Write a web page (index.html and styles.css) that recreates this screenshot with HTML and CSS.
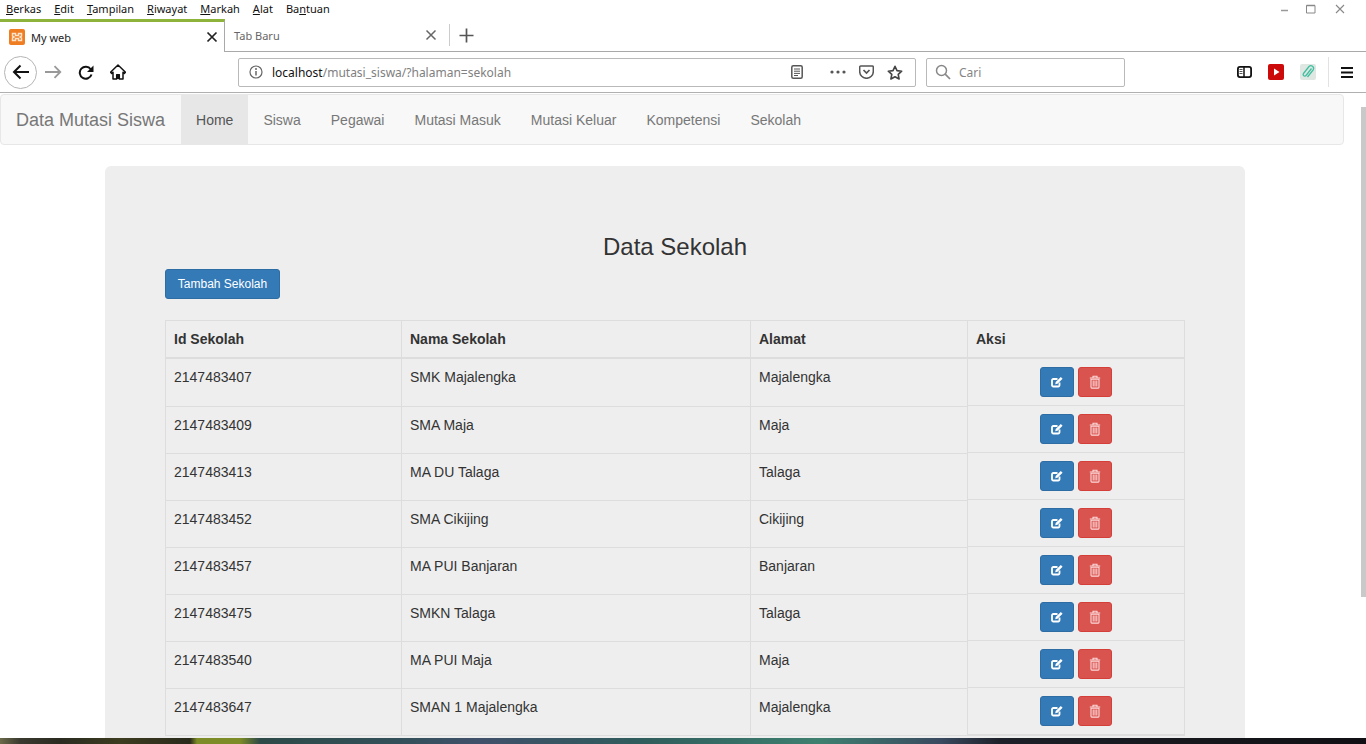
FILE: index.html
```html
<!DOCTYPE html>
<html lang="en">

<head>
    <meta charset="UTF-8">
    <meta name="viewport" content="width=device-width, initial-scale=1.0">
    <title>My web</title>
    <link rel="stylesheet" href="styles.css">
</head>

<body>
    <svg class="defs" width="0" height="0">
        <symbol id="icon-edit" viewBox="0 0 14 14">
            <path d="M9.5 7.5v2.7a1.3 1.3 0 0 1-1.3 1.3H3.3A1.3 1.3 0 0 1 2 10.200V5.300A1.300 1.300 0 0 1 3.300 4H7.500" fill="none" stroke="currentColor" stroke-width="1.800"/>
            <path d="M5.200 9.300l.5-2.300L10.800 1.900l1.800 1.800-5.100 5.100z" fill="currentColor"/>
        </symbol>
        <symbol id="icon-trash" viewBox="0 0 14 14">
            <path d="M1.800 3h10.400M5 3V1.300h4V3" fill="none" stroke="currentColor" stroke-width="1.100"/>
            <path d="M3 4.200h8v8.100a.8.8 0 0 1-.8.8H3.800a.8.8 0 0 1-.8-.8z" fill="none" stroke="currentColor" stroke-width="1.100"/>
            <path d="M5.200 5.500v6M7 5.500v6M8.800 5.500v6" stroke="currentColor" stroke-width="1"/>
        </symbol>
    </svg>

    <div class="browser">
        <div class="menubar">
            <div class="menu-items">
                <span><u>B</u>erkas</span>
                <span><u>E</u>dit</span>
                <span><u>T</u>ampilan</span>
                <span><u>R</u>iwayat</span>
                <span><u>M</u>arkah</span>
                <span><u>A</u>lat</span>
                <span>Ba<u>n</u>tuan</span>
            </div>
            <div class="window-controls">
                <svg width="10" height="10" viewBox="0 0 10 10"><path d="M1 6.500h7" stroke="#999" stroke-width="1.500"/></svg>
                <svg width="10" height="10" viewBox="0 0 10 10"><path d="M.5 1.500h8.500v7.500H.5z" fill="none" stroke="#888"/><path d="M.5 1.500h8.500" stroke="#888" stroke-width="1.500"/></svg>
                <svg width="10" height="10" viewBox="0 0 10 10"><path d="M1 1l8 8M9 1l-8 8" stroke="#888" stroke-width="1.100"/></svg>
            </div>
        </div>

        <div class="tabbar">
            <div class="tab tab-active">
                <svg class="favicon" width="16" height="16" viewBox="0 0 16 16">
                    <rect width="16" height="16" rx="2" fill="#ef7d22"/>
                    <path d="M3.500 4.500h3v2h3v-2h3v2.500l-1.500 1 1.500 1v2.500h-3v-2h-3v2h-3V9l1.500-1-1.500-1z" fill="none" stroke="#fde3c8" stroke-width="1.500"/>
                </svg>
                <span class="tab-title">My web</span>
                <svg class="tab-close" width="12" height="12" viewBox="0 0 12 12"><path d="M1.500 1.500l9 9M10.500 1.500l-9 9" stroke="#222" stroke-width="1.700"/></svg>
            </div>
            <div class="tab tab-idle">
                <span class="tab-title">Tab Baru</span>
                <svg class="tab-close" width="12" height="12" viewBox="0 0 12 12"><path d="M1.500 1.500l9 9M10.500 1.500l-9 9" stroke="#666" stroke-width="1.500"/></svg>
            </div>
            <div class="tab-new">
                <svg width="15" height="15" viewBox="0 0 15 15"><path d="M7.500 .5v14M.5 7.500h14" stroke="#555" stroke-width="1.700"/></svg>
            </div>
        </div>

        <div class="toolbar">
            <div class="back-btn">
                <svg width="18" height="16" viewBox="0 0 18 16"><path d="M17 8H2M8.500 1.500L2 8l6.500 6.500" fill="none" stroke="#111" stroke-width="2"/></svg>
            </div>
            <svg class="tool-forward" width="17" height="14" viewBox="0 0 17 14"><path d="M0 7h15M9.500 1.200L15.300 7l-5.800 5.800" fill="none" stroke="#999" stroke-width="1.800"/></svg>
            <svg class="tool-reload" width="16" height="15" viewBox="0 0 16 15"><path d="M13.500 9.500a6 6 0 1 1-.8-5.200" fill="none" stroke="#111" stroke-width="2"/><path d="M15.500 .5v6.500h-6.500z" fill="#111"/></svg>
            <svg class="tool-home" width="16" height="16" viewBox="0 0 16 16"><path d="M8 1L.5 8.200l1.200 1.200L3 8.200V15h3.700v-4.200h2.600V15H13V8.200l1.300 1.200 1.200-1.200z" fill="#fff" stroke="#111" stroke-width="1.500" stroke-linejoin="round"/><path d="M6.500 15v-4.500h3V15z" fill="#111"/></svg>

            <div class="urlbar">
                <svg class="url-info" width="14" height="14" viewBox="0 0 14 14"><circle cx="7" cy="7" r="6" fill="none" stroke="#666" stroke-width="1.200"/><path d="M7 6v4.500" stroke="#666" stroke-width="1.500"/><circle cx="7" cy="3.900" r="1" fill="#666"/></svg>
                <span class="url-text"><span class="url-host">localhost</span>/mutasi_siswa/?halaman=sekolah</span>
                <svg class="url-reader" width="12" height="14" viewBox="0 0 12 14"><rect x=".8" y=".8" width="10.400" height="12.400" rx="1.500" fill="none" stroke="#555" stroke-width="1.500"/><path d="M3 4h6M3 6.200h6M3 8.400h6M3 10.500h4" stroke="#555"/></svg>
                <svg class="url-dots" width="16" height="4" viewBox="0 0 16 4"><circle cx="2" cy="2" r="1.600" fill="#555"/><circle cx="8" cy="2" r="1.600" fill="#555"/><circle cx="14" cy="2" r="1.600" fill="#555"/></svg>
                <svg class="url-pocket" width="15" height="14" viewBox="0 0 15 14"><path d="M1.700 1h11.600a1 1 0 0 1 1 1v4.500a6.800 6.800 0 0 1-13.600 0V2a1 1 0 0 1 1-1z" fill="none" stroke="#555" stroke-width="1.500"/><path d="M4.500 5l3 3 3-3" fill="none" stroke="#555" stroke-width="1.700"/></svg>
                <svg class="url-star" width="16" height="15" viewBox="0 0 16 15"><path d="M8 1.300l2 4.300 4.700.6-3.500 3.200.9 4.600L8 11.700 3.900 14l.9-4.600L1.300 6.200 6 5.600z" fill="none" stroke="#444" stroke-width="1.600" stroke-linejoin="round"/></svg>
            </div>

            <div class="searchbar">
                <svg width="16" height="16" viewBox="0 0 16 16"><circle cx="6.500" cy="6.500" r="5" fill="none" stroke="#888" stroke-width="1.500"/><path d="M10.200 10.200L15 15" stroke="#888" stroke-width="1.700"/></svg>
                <span>Cari</span>
            </div>

            <div class="tool-right">
                <svg width="15" height="12" viewBox="0 0 15 12"><rect x=".9" y=".9" width="13.200" height="10.200" rx="2" fill="#fff" stroke="#111" stroke-width="1.800"/><path d="M7 1v10" stroke="#111" stroke-width="1.500"/><path d="M2.500 3.500h3M2.500 5.500h3M2.500 7.500h3" stroke="#555"/></svg>
                <svg width="16" height="16" viewBox="0 0 16 16"><rect width="16" height="16" rx="2" fill="#cc0a0a"/><path d="M6 4.500l5.500 3.500L6 11.500z" fill="#fff"/></svg>
                <svg width="16" height="16" viewBox="0 0 16 16"><rect width="16" height="16" rx="2" fill="#dfe7e2"/><path d="M11.500 4.500L6 11.500a1.600 1.600 0 0 1-2.500-2l5.500-7a2.700 2.700 0 0 1 4.200 3.300L7.500 13" fill="none" stroke="#3fbfa0" stroke-width="1.300"/></svg>
                <div class="tool-sep"></div>
                <svg width="12" height="11" viewBox="0 0 12 11"><path d="M0 1h12M0 5.500h12M0 10h12" stroke="#111" stroke-width="1.800"/></svg>
            </div>
        </div>

        <div class="viewport">
            <div class="page">
                <nav class="navbar">
                    <a class="navbar-brand">Data Mutasi Siswa</a>
                    <a class="nav-link active">Home</a>
                    <a class="nav-link">Siswa</a>
                    <a class="nav-link">Pegawai</a>
                    <a class="nav-link">Mutasi Masuk</a>
                    <a class="nav-link">Mutasi Keluar</a>
                    <a class="nav-link">Kompetensi</a>
                    <a class="nav-link">Sekolah</a>
                </nav>

                <div class="jumbotron">
                    <h2 class="page-title">Data Sekolah</h2>
                    <button type="button" class="btn btn-add">Tambah Sekolah</button>

                    <table class="data-table">
                        <thead>
                            <tr>
                                <th class="col-id">Id Sekolah</th>
                                <th class="col-name">Nama Sekolah</th>
                                <th class="col-addr">Alamat</th>
                                <th>Aksi</th>
                            </tr>
                        </thead>
                        <tbody>
                            <tr>
                                <td>2147483407</td>
                                <td>SMK Majalengka</td>
                                <td>Majalengka</td>
                                <td class="actions"><button class="btn btn-icon btn-edit"><svg><use href="#icon-edit"/></svg></button><button class="btn btn-icon btn-delete"><svg><use href="#icon-trash"/></svg></button></td>
                            </tr>
                            <tr>
                                <td>2147483409</td>
                                <td>SMA Maja</td>
                                <td>Maja</td>
                                <td class="actions"><button class="btn btn-icon btn-edit"><svg><use href="#icon-edit"/></svg></button><button class="btn btn-icon btn-delete"><svg><use href="#icon-trash"/></svg></button></td>
                            </tr>
                            <tr>
                                <td>2147483413</td>
                                <td>MA DU Talaga</td>
                                <td>Talaga</td>
                                <td class="actions"><button class="btn btn-icon btn-edit"><svg><use href="#icon-edit"/></svg></button><button class="btn btn-icon btn-delete"><svg><use href="#icon-trash"/></svg></button></td>
                            </tr>
                            <tr>
                                <td>2147483452</td>
                                <td>SMA Cikijing</td>
                                <td>Cikijing</td>
                                <td class="actions"><button class="btn btn-icon btn-edit"><svg><use href="#icon-edit"/></svg></button><button class="btn btn-icon btn-delete"><svg><use href="#icon-trash"/></svg></button></td>
                            </tr>
                            <tr>
                                <td>2147483457</td>
                                <td>MA PUI Banjaran</td>
                                <td>Banjaran</td>
                                <td class="actions"><button class="btn btn-icon btn-edit"><svg><use href="#icon-edit"/></svg></button><button class="btn btn-icon btn-delete"><svg><use href="#icon-trash"/></svg></button></td>
                            </tr>
                            <tr>
                                <td>2147483475</td>
                                <td>SMKN Talaga</td>
                                <td>Talaga</td>
                                <td class="actions"><button class="btn btn-icon btn-edit"><svg><use href="#icon-edit"/></svg></button><button class="btn btn-icon btn-delete"><svg><use href="#icon-trash"/></svg></button></td>
                            </tr>
                            <tr>
                                <td>2147483540</td>
                                <td>MA PUI Maja</td>
                                <td>Maja</td>
                                <td class="actions"><button class="btn btn-icon btn-edit"><svg><use href="#icon-edit"/></svg></button><button class="btn btn-icon btn-delete"><svg><use href="#icon-trash"/></svg></button></td>
                            </tr>
                            <tr>
                                <td>2147483647</td>
                                <td>SMAN 1 Majalengka</td>
                                <td>Majalengka</td>
                                <td class="actions"><button class="btn btn-icon btn-edit"><svg><use href="#icon-edit"/></svg></button><button class="btn btn-icon btn-delete"><svg><use href="#icon-trash"/></svg></button></td>
                            </tr>
                        </tbody>
                    </table>
                </div>
            </div>
            <div class="scrollbar"><div class="scroll-thumb"></div></div>
        </div>

        <div class="taskbar"></div>
    </div>
</body>

</html>
```

FILE: styles.css
```css
* {
    box-sizing: border-box;
}

body {
    margin: 0;
    font-family: "Liberation Sans", Arial, sans-serif;
    font-size: 14px;
    color: #333;
    background-color: #fff;
    overflow: hidden;
}

.defs {
    display: none;
}

.browser {
    display: flex;
    flex-direction: column;
    height: 744px;
    overflow: hidden;
}

/* Browser chrome */
.menubar {
    display: flex;
    justify-content: space-between;
    height: 19px;
    padding: 0 21px 0 6px;
    font-family: "Noto Sans", sans-serif;
    font-size: 11px;
    line-height: 18px;
    color: #111;
}

.menu-items {
    display: flex;
    gap: 13px;
}

.window-controls {
    display: flex;
    align-items: center;
    gap: 16px;
    height: 18px;
}

.window-controls svg:nth-child(2) {
    margin-right: 3px;
}

.tabbar {
    display: flex;
    align-items: stretch;
    height: 33px;
    border-bottom: 1px solid #a9a9a9;
    font-family: "Noto Sans", sans-serif;
    font-size: 11px;
}

.tab {
    display: flex;
    align-items: center;
    justify-content: space-between;
}

.tab-active {
    width: 225px;
    margin-bottom: -1px;
    padding: 0 6px 0 9px;
    border-top: 3px solid #8db33a;
    border-right: 1px solid #a9a9a9;
    background-color: #fff;
    color: #222;
}

.tab-active .tab-title {
    flex: 1;
    margin-left: 6px;
}

.tab-idle {
    width: 224px;
    padding: 0 12px 0 9px;
    color: #666;
}

.tab-new {
    display: flex;
    align-items: center;
    margin: 5px 0;
    padding-left: 9px;
    border-left: 1px solid #ccc;
}

.toolbar {
    display: flex;
    align-items: center;
    height: 41px;
    border-bottom: 1px solid #b0b0b0;
}

.back-btn {
    display: flex;
    align-items: center;
    justify-content: center;
    width: 33px;
    height: 33px;
    margin-left: 4px;
    border: 1px solid #b5b5b5;
    border-radius: 50%;
}

.tool-forward {
    margin-left: 8px;
}

.tool-reload {
    margin-left: 16px;
}

.tool-home {
    margin-left: 16px;
}

.urlbar {
    display: flex;
    align-items: center;
    width: 678px;
    height: 29px;
    margin-left: 112px;
    padding-left: 10px;
    border: 1px solid #b9b9b9;
    border-radius: 2px;
    font-family: "Noto Sans", sans-serif;
    font-size: 12px;
    color: #808080;
}

.url-text {
    width: 519px;
    margin-left: 9px;
}

.url-host {
    color: #111;
}

.url-reader {
    margin-left: 0;
}

.url-dots {
    margin-left: 27px;
}

.url-pocket {
    margin-left: 13px;
}

.url-star {
    margin-left: 13px;
}

.searchbar {
    display: flex;
    align-items: center;
    gap: 8px;
    width: 199px;
    height: 29px;
    margin-left: 10px;
    padding-left: 8px;
    border: 1px solid #b9b9b9;
    border-radius: 2px;
    font-family: "Noto Sans", sans-serif;
    font-size: 12px;
    color: #858585;
}

.tool-right {
    display: flex;
    align-items: center;
    gap: 16px;
    margin-left: 112px;
}

.tool-sep {
    width: 1px;
    height: 30px;
    margin: 0 -4px 0 -4px;
    background-color: #e2e2e2;
}

/* Page */
.viewport {
    display: flex;
    flex: 1;
    min-height: 0;
}

.page {
    flex: 1;
    overflow: hidden;
    padding: 1px 11px 0 0;
}

.scrollbar {
    width: 11px;
    padding: 14px 0 0 6px;
}

.scroll-thumb {
    width: 5px;
    height: 490px;
    background-color: #c9c9c9;
}

.navbar {
    display: flex;
    height: 51px;
    margin-bottom: 21px;
    border: 1px solid #e7e7e7;
    border-radius: 4px;
    background-color: #f8f8f8;
}

.navbar-brand {
    margin-right: 1px;
    padding: 15px;
    font-size: 18px;
    line-height: 20px;
    color: #777;
}

.nav-link {
    padding: 15px 15px;
    line-height: 20px;
    color: #777;
}

.nav-link.active {
    background-color: #e7e7e7;
    color: #555;
}

.jumbotron {
    width: 1140px;
    margin-left: 105px;
    padding: 68px 60px 48px;
    border-radius: 6px;
    background-color: #eee;
}

.page-title {
    margin: 0 0 9px;
    font-size: 24px;
    font-weight: 400;
    line-height: 26px;
    text-align: center;
}

.btn {
    display: inline-block;
    border: 1px solid transparent;
    border-radius: 3px;
    font-family: inherit;
    color: #fff;
}

.btn-add {
    display: block;
    width: 115px;
    height: 30px;
    margin-bottom: 21px;
    padding: 0;
    border-color: #2e6da4;
    background-color: #337ab7;
    font-size: 12px;
}

.data-table {
    width: 1020px;
    border-collapse: collapse;
    table-layout: fixed;
    border: 1px solid #ddd;
}

.data-table th,
.data-table td {
    height: 47px;
    padding: 8px;
    border: 1px solid #ddd;
    line-height: 20px;
    text-align: left;
    vertical-align: top;
}

.data-table th {
    height: 37px;
    border-bottom-width: 2px;
    font-weight: 700;
    vertical-align: bottom;
}

.col-id {
    width: 236px;
}

.col-name {
    width: 349px;
}

.col-addr {
    width: 217px;
}

.data-table td.actions {
    display: flex;
    justify-content: center;
    gap: 4px;
    border-width: 0 0 1px;
    padding-top: 8px;
}

.btn-icon {
    display: flex;
    align-items: center;
    justify-content: center;
    width: 34px;
    height: 30px;
    padding: 0;
}

.btn-icon svg {
    width: 14px;
    height: 14px;
}

.btn-edit {
    border-color: #2e6da4;
    background-color: #337ab7;
}

.btn-delete {
    border-color: #d43f3a;
    background-color: #d9534f;
    color: #fbdcdc;
}

.taskbar {
    flex: none;
    height: 6px;
    background: linear-gradient(90deg, #6b6a4a 0, #3a3a30 20px, #2b2b22 60px, #3c3c20 120px, #2a2a1c 190px, #7d8c26 197px, #7d8c26 240px, #2d4a48 260px, #33505a 400px, #40506a 480px, #2f5c5c 640px, #3e8070 820px, #3a4a60 940px, #1d2028 1000px, #101014 1366px);
}
```
